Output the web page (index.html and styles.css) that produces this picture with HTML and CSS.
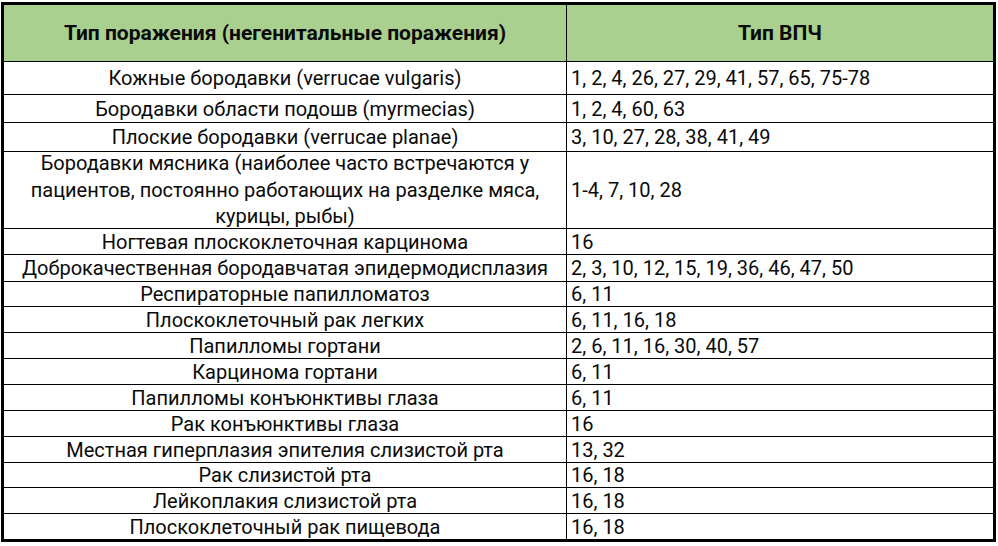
FILE: index.html
```html
<!DOCTYPE html>
<html lang="ru">
<head>
<meta charset="utf-8">
<title>Типы ВПЧ</title>
<link rel="stylesheet" href="styles.css">
</head>
<body>
<div class="hpv-table">
  <div class="cell head c1">Тип поражения (негенитальные поражения)</div>
  <div class="cell head c2">Тип ВПЧ</div>

  <div class="cell c1">Кожные бородавки (verrucae vulgaris)</div>
  <div class="cell c2">1, 2, 4, 26, 27, 29, 41, 57, 65, 75-78</div>

  <div class="cell c1">Бородавки области подошв (myrmecias)</div>
  <div class="cell c2">1, 2, 4, 60, 63</div>

  <div class="cell c1">Плоские бородавки (verrucae planae)</div>
  <div class="cell c2">3, 10, 27, 28, 38, 41, 49</div>

  <div class="cell c1 multi">Бородавки мясника (наиболее часто встречаются у<br>пациентов, постоянно работающих на разделке мяса,<br>курицы, рыбы)</div>
  <div class="cell c2">1-4, 7, 10, 28</div>

  <div class="cell c1">Ногтевая плоскоклеточная карцинома</div>
  <div class="cell c2">16</div>

  <div class="cell c1">Доброкачественная бородавчатая эпидермодисплазия</div>
  <div class="cell c2">2, 3, 10, 12, 15, 19, 36, 46, 47, 50</div>

  <div class="cell c1">Респираторные папилломатоз</div>
  <div class="cell c2">6, 11</div>

  <div class="cell c1">Плоскоклеточный рак легких</div>
  <div class="cell c2">6, 11, 16, 18</div>

  <div class="cell c1">Папилломы гортани</div>
  <div class="cell c2">2, 6, 11, 16, 30, 40, 57</div>

  <div class="cell c1">Карцинома гортани</div>
  <div class="cell c2">6, 11</div>

  <div class="cell c1">Папилломы конъюнктивы глаза</div>
  <div class="cell c2">6, 11</div>

  <div class="cell c1">Рак конъюнктивы глаза</div>
  <div class="cell c2">16</div>

  <div class="cell c1">Местная гиперплазия эпителия слизистой рта</div>
  <div class="cell c2">13, 32</div>

  <div class="cell c1">Рак слизистой рта</div>
  <div class="cell c2">16, 18</div>

  <div class="cell c1">Лейкоплакия слизистой рта</div>
  <div class="cell c2">16, 18</div>

  <div class="cell c1 last">Плоскоклеточный рак пищевода</div>
  <div class="cell c2 last">16, 18</div>
</div>
</body>
</html>
```

FILE: styles.css
```css
html, body {
  margin: 0;
  padding: 0;
  background: #ffffff;
}

body {
  font-family: Roboto, "Liberation Sans", sans-serif;
  color: #0a0a0a;
}

.hpv-table {
  display: grid;
  grid-template-columns: 563px 426px;
  grid-template-rows: 57px 33px 28px 29px 77px 26px 27px 25px 26px 26px 26px 26px 26px 26px 25px 26px 25px;
  width: max-content;
  margin: 2px 0 0 1px;
  border: 3px solid #000000;
}

.cell {
  box-sizing: border-box;
  display: flex;
  align-items: center;
  font-size: 20px;
  line-height: 22px;
  border-bottom: 1px solid #000000;
  white-space: nowrap;
}

.cell.last {
  border-bottom: none;
}

.c1 {
  justify-content: center;
  text-align: center;
  border-right: 1px solid #000000;
}

.c2 {
  padding-left: 4px;
}

.multi {
  line-height: 26.5px;
}

.head {
  background: #a9d08e;
  font-weight: 700;
  font-size: 21px;
  justify-content: center;
  padding-left: 0;
}
```
